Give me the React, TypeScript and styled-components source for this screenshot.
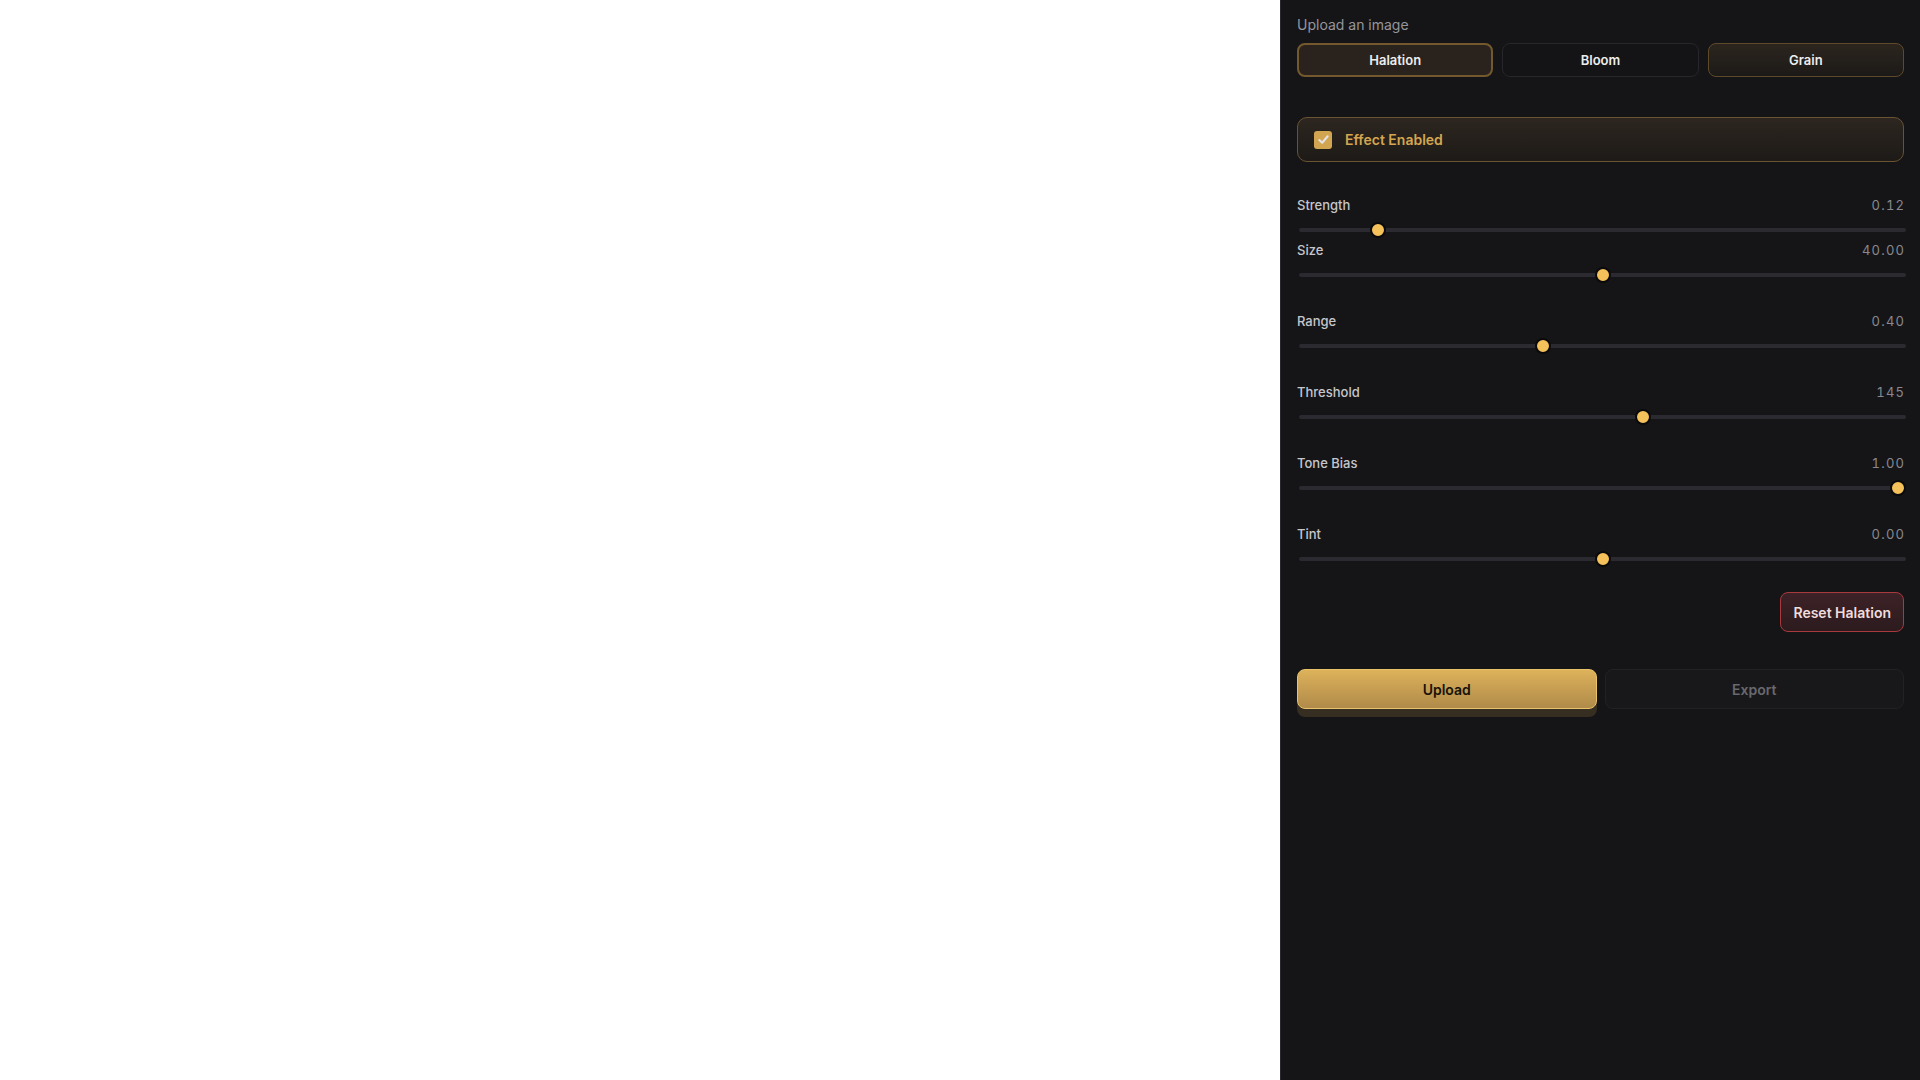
import React, { useState } from "react";
import styled, { createGlobalStyle, css } from "styled-components";

const GlobalStyle = createGlobalStyle`
  html, body, #root { margin: 0; padding: 0; height: 100%; }
  body { background: #ffffff; font-family: Inter, "Noto Sans", "Liberation Sans", sans-serif; }
  * { box-sizing: border-box; }
`;

const Page = styled.div`
  display: flex;
  height: 100vh;
  width: 100vw;
  overflow: hidden;
`;

const Canvas = styled.div`
  flex: 1;
  background: #ffffff;
`;

const Panel = styled.aside`
  width: 640px;
  flex-shrink: 0;
  height: 100%;
  background: #151518;
  border-left: 1px solid #2a2a2e;
  padding: 16px;
  display: flex;
  flex-direction: column;
`;

const Caption = styled.div`
  font-size: 14px;
  line-height: 18px;
  color: #95959b;
  margin-bottom: 9px;
`;

const TabRow = styled.div`
  display: grid;
  grid-template-columns: repeat(3, 1fr);
  gap: 9px;
`;

type TabVariant = "active" | "enabled" | "idle";

const Tab = styled.button<{ $variant: TabVariant }>`
  height: 34px;
  border-radius: 8px;
  font-family: inherit;
  font-size: 13px;
  font-weight: 600;
  color: #ededee;
  cursor: pointer;
  ${({ $variant }) =>
    $variant === "active"
      ? css`
          background: #2a231d;
          border: 2px solid #75592e;
        `
      : $variant === "enabled"
      ? css`
          background: linear-gradient(180deg, #2c251e 0%, #1c1a18 100%);
          border: 1px solid #5e4a29;
        `
      : css`
          background: #141417;
          border: 1px solid #27272b;
        `}
`;

const EffectBox = styled.label`
  margin-top: 40px;
  height: 45px;
  display: flex;
  align-items: center;
  gap: 13px;
  padding: 0 16px;
  border-radius: 10px;
  border: 1px solid #6a5330;
  background: linear-gradient(180deg, #2d2620 0%, #1d1a17 100%);
  cursor: pointer;
`;

const CheckBox = styled.span`
  width: 18px;
  height: 18px;
  border-radius: 3px;
  background: #d2a550;
  display: flex;
  align-items: center;
  justify-content: center;
`;

const EffectText = styled.span`
  font-size: 14px;
  font-weight: 600;
  color: #d4a64f;
`;

const Controls = styled.div`
  margin-top: 35px;
  display: flex;
  flex-direction: column;
`;

const Group = styled.div<{ $space: number }>`
  display: flex;
  flex-direction: column;
  gap: 8px;
  margin-bottom: ${({ $space }) => $space}px;
`;

const LabelRow = styled.div`
  display: flex;
  justify-content: space-between;
  align-items: center;
  height: 16px;
`;

const Label = styled.span`
  font-size: 13px;
  font-weight: 500;
  color: #c6c6ca;
`;

const Value = styled.span`
  font-size: 13px;
  color: #88888e;
  font-variant-numeric: tabular-nums;
  letter-spacing: 1.2px;
  margin-right: -1.2px;
`;

const Range = styled.input`
  -webkit-appearance: none;
  appearance: none;
  width: 100%;
  height: 16px;
  margin: 1px 0 0 2px;
  background: transparent;
  cursor: pointer;

  &::-webkit-slider-runnable-track {
    height: 4px;
    border-radius: 2px;
    background: #2a2a30;
  }
  &::-webkit-slider-thumb {
    -webkit-appearance: none;
    appearance: none;
    width: 16px;
    height: 16px;
    margin-top: -6px;
    border-radius: 50%;
    background: #f5c15b;
    border: 2px solid #0a0a0b;
  }
  &::-moz-range-track {
    height: 4px;
    border-radius: 2px;
    background: #2a2a30;
  }
  &::-moz-range-thumb {
    width: 12px;
    height: 12px;
    border-radius: 50%;
    background: #f5c15b;
    border: 2px solid #0a0a0b;
  }
  &:focus { outline: none; }
`;

const ResetRow = styled.div`
  display: flex;
  justify-content: flex-end;
  margin-top: 25px;
`;

const ResetButton = styled.button`
  height: 40px;
  padding: 0 12px;
  border-radius: 8px;
  border: 1px solid #a8393d;
  background: linear-gradient(180deg, #3d2227 0%, #2c1b1e 100%);
  color: #f1dcdc;
  font-family: inherit;
  font-size: 14px;
  font-weight: 600;
  cursor: pointer;
`;

const ActionRow = styled.div`
  display: grid;
  grid-template-columns: 1fr 1fr;
  gap: 8px;
  margin-top: 37px;
`;

const ActionButton = styled.button<{ $primary?: boolean }>`
  height: 40px;
  border-radius: 8px;
  font-family: inherit;
  font-size: 14px;
  font-weight: 600;
  cursor: pointer;
  ${({ $primary }) =>
    $primary
      ? css`
          background: linear-gradient(180deg, #ddb25b 0%, #b08a49 100%);
          border: 1px solid #e9c36b;
          color: #17120a;
          box-shadow: 0 8px 0 #372e22;
        `
      : css`
          background: #18181b;
          border: 1px solid #222226;
          color: #68686e;
        `}
`;

type SliderDef = {
  key: string;
  label: string;
  min: number;
  max: number;
  step: number;
  value: number;
  digits: number;
  space: number;
};

const initial: SliderDef[] = [
  { key: "strength", label: "Strength", min: 0, max: 1, step: 0.01, value: 0.12, digits: 2, space: 4 },
  { key: "size", label: "Size", min: 0, max: 80, step: 1, value: 40, digits: 2, space: 30 },
  { key: "range", label: "Range", min: 0, max: 1, step: 0.01, value: 0.4, digits: 2, space: 30 },
  { key: "threshold", label: "Threshold", min: 0, max: 255, step: 1, value: 145, digits: 0, space: 30 },
  { key: "tone", label: "Tone Bias", min: 0, max: 1, step: 0.01, value: 1, digits: 2, space: 30 },
  { key: "tint", label: "Tint", min: -1, max: 1, step: 0.01, value: 0, digits: 2, space: 0 },
];

export default function App() {
  const [tab, setTab] = useState("Halation");
  const [enabled, setEnabled] = useState(true);
  const [sliders, setSliders] = useState(initial);

  const update = (key: string, v: number) =>
    setSliders((s) => s.map((d) => (d.key === key ? { ...d, value: v } : d)));

  const variantFor = (name: string): TabVariant =>
    name === tab ? "active" : name === "Grain" ? "enabled" : "idle";

  return (
    <>
      <GlobalStyle />
      <Page>
        <Canvas />
        <Panel>
          <Caption>Upload an image</Caption>
          <TabRow>
            {["Halation", "Bloom", "Grain"].map((n) => (
              <Tab key={n} $variant={variantFor(n)} onClick={() => setTab(n)}>
                {n}
              </Tab>
            ))}
          </TabRow>

          <EffectBox onClick={() => setEnabled((e) => !e)}>
            <CheckBox>
              {enabled && (
                <svg width="13" height="13" viewBox="0 0 14 14" fill="none">
                  <path
                    d="M2.5 7.5 L5.6 10.5 L11.5 3.5"
                    stroke="#e4e4e6"
                    strokeWidth="2.2"
                    strokeLinecap="round"
                    strokeLinejoin="round"
                  />
                </svg>
              )}
            </CheckBox>
            <EffectText>Effect Enabled</EffectText>
          </EffectBox>

          <Controls>
            {sliders.map((s) => (
              <Group key={s.key} $space={s.space}>
                <LabelRow>
                  <Label>{s.label}</Label>
                  <Value>{s.value.toFixed(s.digits)}</Value>
                </LabelRow>
                <Range
                  type="range"
                  min={s.min}
                  max={s.max}
                  step={s.step}
                  value={s.value}
                  onChange={(e) => update(s.key, parseFloat(e.target.value))}
                />
              </Group>
            ))}
          </Controls>

          <ResetRow>
            <ResetButton onClick={() => setSliders(initial)}>Reset Halation</ResetButton>
          </ResetRow>

          <ActionRow>
            <ActionButton $primary>Upload</ActionButton>
            <ActionButton>Export</ActionButton>
          </ActionRow>
        </Panel>
      </Page>
    </>
  );
}
